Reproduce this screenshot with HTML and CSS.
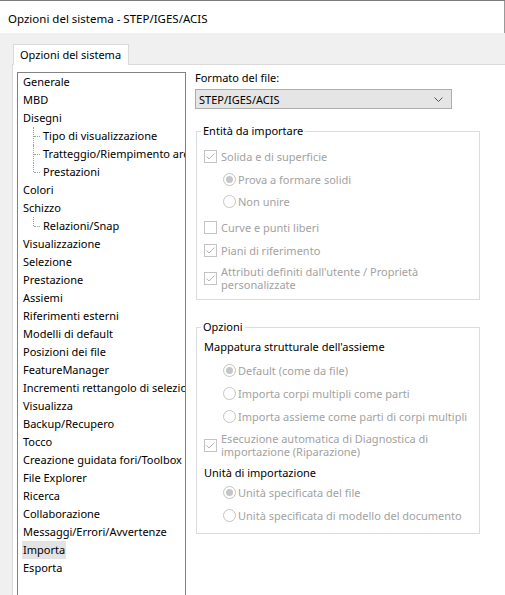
FILE: index.html
```html
<!DOCTYPE html>
<html lang="it">
<head>
<meta charset="utf-8">
<title>Opzioni del sistema - STEP/IGES/ACIS</title>
<link rel="stylesheet" href="styles.css">
</head>
<body>
<div class="window">
  <div class="titlebar">Opzioni del sistema - STEP/IGES/ACIS</div>
  <div class="client">
    <div class="tabs"><div class="tab">Opzioni del sistema</div></div>
    <div class="page">
      <ul class="tree">
        <li>Generale</li>
        <li>MBD</li>
        <li>Disegni</li>
        <li class="child">Tipo di visualizzazione</li>
        <li class="child">Tratteggio/Riempimento area</li>
        <li class="child last">Prestazioni</li>
        <li>Colori</li>
        <li>Schizzo</li>
        <li class="child last">Relazioni/Snap</li>
        <li>Visualizzazione</li>
        <li>Selezione</li>
        <li>Prestazione</li>
        <li>Assiemi</li>
        <li>Riferimenti esterni</li>
        <li>Modelli di default</li>
        <li>Posizioni dei file</li>
        <li>FeatureManager</li>
        <li>Incrementi rettangolo di selezione</li>
        <li>Visualizza</li>
        <li>Backup/Recupero</li>
        <li>Tocco</li>
        <li>Creazione guidata fori/Toolbox</li>
        <li>File Explorer</li>
        <li>Ricerca</li>
        <li>Collaborazione</li>
        <li>Messaggi/Errori/Avvertenze</li>
        <li><span class="sel">Importa</span></li>
        <li>Esporta</li>
      </ul>
      <div class="panel">
        <div class="field-label">Formato del file:</div>
        <div class="select">
          <span>STEP/IGES/ACIS</span>
          <svg class="chev" width="9" height="5" viewBox="0 0 9 5"><polyline points="0.5,0.5 4.5,4.5 8.5,0.5" fill="none" stroke="#555" stroke-width="1"/></svg>
        </div>

        <fieldset class="group g1">
          <legend>Entità da importare</legend>
          <div class="opt chk on r-solida"><span class="box"><svg width="11" height="11" viewBox="0 0 11 11"><polyline points="1.5,5.5 4,8 9.5,2.5" fill="none" stroke="#b4b4b4" stroke-width="1"/></svg></span><span class="lbl">Solida e di superficie</span></div>
          <div class="opt rad on r-prova"><span class="circ"></span><span class="lbl">Prova a formare solidi</span></div>
          <div class="opt rad r-non"><span class="circ"></span><span class="lbl">Non unire</span></div>
          <div class="opt chk r-curve"><span class="box"></span><span class="lbl">Curve e punti liberi</span></div>
          <div class="opt chk on r-piani"><span class="box"><svg width="11" height="11" viewBox="0 0 11 11"><polyline points="1.5,5.5 4,8 9.5,2.5" fill="none" stroke="#b4b4b4" stroke-width="1"/></svg></span><span class="lbl">Piani di riferimento</span></div>
          <div class="opt chk on multi r-attr"><span class="box"><svg width="11" height="11" viewBox="0 0 11 11"><polyline points="1.5,5.5 4,8 9.5,2.5" fill="none" stroke="#b4b4b4" stroke-width="1"/></svg></span><span class="lbl">Attributi definiti dall'utente / Proprietà<br>personalizzate</span></div>
        </fieldset>

        <fieldset class="group g2">
          <legend>Opzioni</legend>
          <div class="sub r-map">Mappatura strutturale dell'assieme</div>
          <div class="opt rad on r-def"><span class="circ"></span><span class="lbl">Default (come da file)</span></div>
          <div class="opt rad r-corpi"><span class="circ"></span><span class="lbl">Importa corpi multipli come parti</span></div>
          <div class="opt rad r-ass"><span class="circ"></span><span class="lbl">Importa assieme come parti di corpi multipli</span></div>
          <div class="opt chk on multi r-esec"><span class="box"><svg width="11" height="11" viewBox="0 0 11 11"><polyline points="1.5,5.5 4,8 9.5,2.5" fill="none" stroke="#b4b4b4" stroke-width="1"/></svg></span><span class="lbl">Esecuzione automatica di Diagnostica di<br>importazione (Riparazione)</span></div>
          <div class="sub r-unit">Unità di importazione</div>
          <div class="opt rad on r-ufile"><span class="circ"></span><span class="lbl">Unità specificata del file</span></div>
          <div class="opt rad r-umod"><span class="circ"></span><span class="lbl">Unità specificata di modello del documento</span></div>
        </fieldset>
      </div>
    </div>
  </div>
</div>
</body>
</html>
```

FILE: styles.css
```css
* { box-sizing: border-box; }
html, body {
  margin: 0;
  padding: 0;
  width: 505px;
  height: 595px;
  overflow: hidden;
  background: #f0f0f0;
}
body {
  font-family: "Noto Sans", "Open Sans", sans-serif;
  font-size: 11px;
  color: #000;
}
.window {
  width: 505px;
  height: 595px;
  border-top: 1px solid #7a7a7a;
  display: flex;
  flex-direction: column;
}
.titlebar {
  height: 32px;
  padding: 2px 0 0 8px;
  display: flex;
  align-items: center;
  background: #fff;
  font-size: 11.5px;
  border-right: 1px solid #9a9a9a;
  white-space: nowrap;
}
.client {
  flex: 1;
  background: #f0f0f0;
  padding-top: 11px;
  display: flex;
  flex-direction: column;
  min-height: 0;
}
.tabs {
  display: flex;
  padding-left: 13px;
}
.tab {
  position: relative;
  z-index: 1;
  width: 116px;
  height: 21px;
  margin-bottom: -1px;
  padding-left: 6px;
  border: 1px solid #d9d9d9;
  border-bottom: none;
  background: #fff;
  line-height: 19px;
  white-space: nowrap;
}
.page {
  flex: 1;
  min-height: 0;
  margin-left: 12px;
  background: #fff;
  border-top: 1px solid #d9d9d9;
  border-left: 1px solid #d9d9d9;
  padding: 7px 0 0 4px;
  display: flex;
  gap: 9px;
  align-items: flex-start;
}
.tree {
  list-style: none;
  margin: 0;
  padding: 0;
  width: 169px;
  height: 524px;
  flex: none;
  border: 1px solid #828282;
  border-bottom: none;
  background: #fff;
  overflow: hidden;
}
.tree li {
  position: relative;
  height: 18px;
  line-height: 18px;
  padding-left: 5px;
  white-space: nowrap;
  overflow: hidden;
}
.tree li.child { padding-left: 25px; }
.tree li.child::before {
  content: "";
  position: absolute;
  left: 15px;
  top: 0;
  height: 18px;
  border-left: 1px dotted #a0a0a0;
}
.tree li.child.last::before { height: 9px; }
.tree li.child::after {
  content: "";
  position: absolute;
  left: 16px;
  top: 9px;
  width: 6px;
  border-top: 1px dotted #a0a0a0;
}
.tree .sel {
  display: inline-block;
  background: #e3e3e3;
  padding: 0 1px;
  margin-left: -1px;
}
.panel {
  margin-top: -2px;
  width: 284px;
  flex: none;
}
.field-label {
  height: 16px;
  line-height: 16px;
}
.select {
  margin-top: 3px;
  width: 257px;
  height: 20px;
  border: 1px solid #adadad;
  background: #e5e5e5;
  display: flex;
  align-items: center;
  justify-content: space-between;
  padding: 0 8px 0 3px;
}
.chev { display: block; }
.group {
  margin: 14px 0 0 1px;
  padding: 0 0 8px 0;
  width: 284px;
  border: 1px solid #dcdcdc;
  min-width: 0;
}
.group legend {
  margin-left: 4px;
  padding: 0 2px;
  line-height: 16px;
  height: 16px;
}
.g2 { margin-top: 19px; padding-bottom: 7px; }
.opt {
  display: flex;
  align-items: center;
  height: 22px;
  color: #a2a2a2;
  white-space: nowrap;
}
.opt.chk { padding-left: 7px; gap: 4px; }
.opt.rad { padding-left: 26px; gap: 2px; }
.opt.multi { height: 26px; }
.opt.multi .lbl { line-height: 13px; }
.box {
  width: 13px;
  height: 13px;
  flex: none;
  border: 1px solid #c4c4c4;
  background: #fff;
  display: flex;
  align-items: center;
  justify-content: center;
}
.box svg { display: block; }
.circ {
  width: 13px;
  height: 13px;
  flex: none;
  border: 1px solid #c4c4c4;
  border-radius: 50%;
  background: #fff;
  display: flex;
  align-items: center;
  justify-content: center;
}
.opt.rad.on .circ::after {
  content: "";
  width: 7px;
  height: 7px;
  border-radius: 50%;
  background: #c6c6c6;
}
.sub {
  height: 16px;
  line-height: 16px;
  padding-left: 7px;
  white-space: nowrap;
}
.r-solida { margin-top: 6px; }
.r-prova { margin-top: 1px; }
.r-curve { margin-top: 4px; }
.r-piani { margin-top: 1px; }
.r-attr { margin-top: 4px; }
.r-map { margin-top: 4px; }
.r-def { margin-top: 4px; }
.r-corpi { margin-top: 1px; }
.r-ass { margin-top: 1px; }
.r-esec { margin-top: 5px; }
.r-unit { margin-top: 7px; }
.r-umod { margin-top: 1px; }
```
